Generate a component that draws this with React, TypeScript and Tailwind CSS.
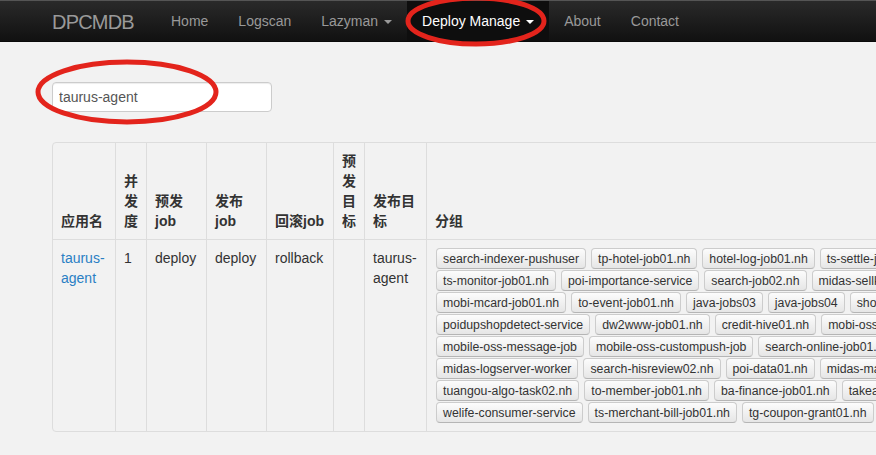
const navItems = [
  { label: "Home" },
  { label: "Logscan" },
  { label: "Lazyman", caret: true },
  { label: "Deploy Manage", caret: true, active: true },
  { label: "About" },
  { label: "Contact" },
];

const groupRows: string[][] = [
  ["search-indexer-pushuser", "tp-hotel-job01.nh", "hotel-log-job01.nh", "ts-settle-job01.nh"],
  ["ts-monitor-job01.nh", "poi-importance-service", "search-job02.nh", "midas-sellkeeper-job"],
  ["mobi-mcard-job01.nh", "to-event-job01.nh", "java-jobs03", "java-jobs04", "shop-job01.nh"],
  ["poidupshopdetect-service", "dw2www-job01.nh", "credit-hive01.nh", "mobi-osswap-job"],
  ["mobile-oss-message-job", "mobile-oss-custompush-job", "search-online-job01.nh"],
  ["midas-logserver-worker", "search-hisreview02.nh", "poi-data01.nh", "midas-match-job"],
  ["tuangou-algo-task02.nh", "to-member-job01.nh", "ba-finance-job01.nh", "takeaway-job01.nh"],
  ["welife-consumer-service", "ts-merchant-bill-job01.nh", "tg-coupon-grant01.nh"],
];

const font = "font-['Liberation_Sans','Noto_Sans_CJK_SC',sans-serif]";

function Caret({ light }: { light?: boolean }) {
  return (
    <span
      className={`ml-[6px] inline-block w-0 h-0 border-x-4 border-x-transparent border-t-4 ${
        light ? "border-t-white" : "border-t-[#999]"
      }`}
    />
  );
}

function Navbar() {
  return (
    <div className="h-[42px] flex items-center bg-linear-to-b from-[#2a2a2a] to-[#111] border-t border-t-[#555] border-b border-b-[#0a0a0a]">
      <div className="ml-[52px] w-[104px] pt-px text-[20px] font-light tracking-[-0.8px] text-[#999]">
        DPCMDB
      </div>
      <div className="flex h-full">
        {navItems.map((item) => (
          <div
            key={item.label}
            className={`flex items-center pt-px px-[15px] text-[14px] ${
              item.active ? "bg-[#0e0e0e] text-white" : "text-[#999]"
            }`}
          >
            {item.label}
            {item.caret && <Caret light={item.active} />}
          </div>
        ))}
      </div>
    </div>
  );
}

function Tag({ name }: { name: string }) {
  return (
    <span className="h-[21px] flex items-center px-[6px] text-[12.3px] text-[#333] rounded-[4px] border border-[#ccc] border-b-[#b5b5b5] bg-linear-to-b from-[#fcfcfc] to-[#e6e6e6] whitespace-nowrap">
      {name}
    </span>
  );
}

const th = "border-l border-[#ddd] px-2 py-2 align-bottom text-left font-bold leading-5";
const td = "border-l border-t border-[#ddd] px-2 py-2 align-top leading-5";

export default function App() {
  return (
    <div className={`relative w-full h-screen overflow-hidden bg-[#f2f2f2] text-[#333] ${font}`}>
      <Navbar />

      <div className="pl-[52px] pt-[40px]">
        <input
          defaultValue="taurus-agent"
          className="w-[220px] h-[30px] px-[6px] text-[14px] text-[#555] bg-white border border-[#ccc] rounded-[4px] shadow-[inset_0_1px_1px_rgba(0,0,0,0.075)] outline-none"
        />

        <table className="mt-[30px] table-fixed border-separate border-spacing-0 border border-[#ddd] rounded-[4px] w-[1200px] text-[14px]">
          <thead>
            <tr>
              <th className="w-[62px] px-2 py-2 align-bottom text-left font-bold leading-5">应用名</th>
              <th className={`${th} w-[31px]`}>并发度</th>
              <th className={`${th} w-[60px]`}>预发job</th>
              <th className={`${th} w-[60px]`}>发布job</th>
              <th className={`${th} w-[67px] whitespace-nowrap`}>回滚job</th>
              <th className={`${th} w-[31px]`}>预发目标</th>
              <th className={`${th} w-[62px]`}>发布目标</th>
              <th className={th}>分组</th>
            </tr>
          </thead>
          <tbody>
            <tr>
              <td className="border-t border-[#ddd] px-2 py-2 align-top leading-5">
                <a className="text-[#2a7fc4]">taurus-agent</a>
              </td>
              <td className={td}>1</td>
              <td className={td}>deploy</td>
              <td className={td}>deploy</td>
              <td className={td}>rollback</td>
              <td className={td}></td>
              <td className={td}>taurus-agent</td>
              <td className={`${td} pl-[9px]`}>
                <div className="flex flex-col gap-y-px">
                  {groupRows.map((row, i) => (
                    <div key={i} className="flex gap-[5px]">
                      {row.map((name) => (
                        <Tag key={name} name={name} />
                      ))}
                    </div>
                  ))}
                </div>
              </td>
            </tr>
          </tbody>
        </table>
      </div>

      {/* red annotation circles */}
      <svg className="absolute inset-0 pointer-events-none" width="876" height="455">
        <ellipse cx="476" cy="21" rx="68" ry="23" fill="none" stroke="#e3241c" strokeWidth="5" />
        <ellipse cx="127" cy="92" rx="89" ry="30" fill="none" stroke="#e3241c" strokeWidth="5" />
      </svg>
    </div>
  );
}
